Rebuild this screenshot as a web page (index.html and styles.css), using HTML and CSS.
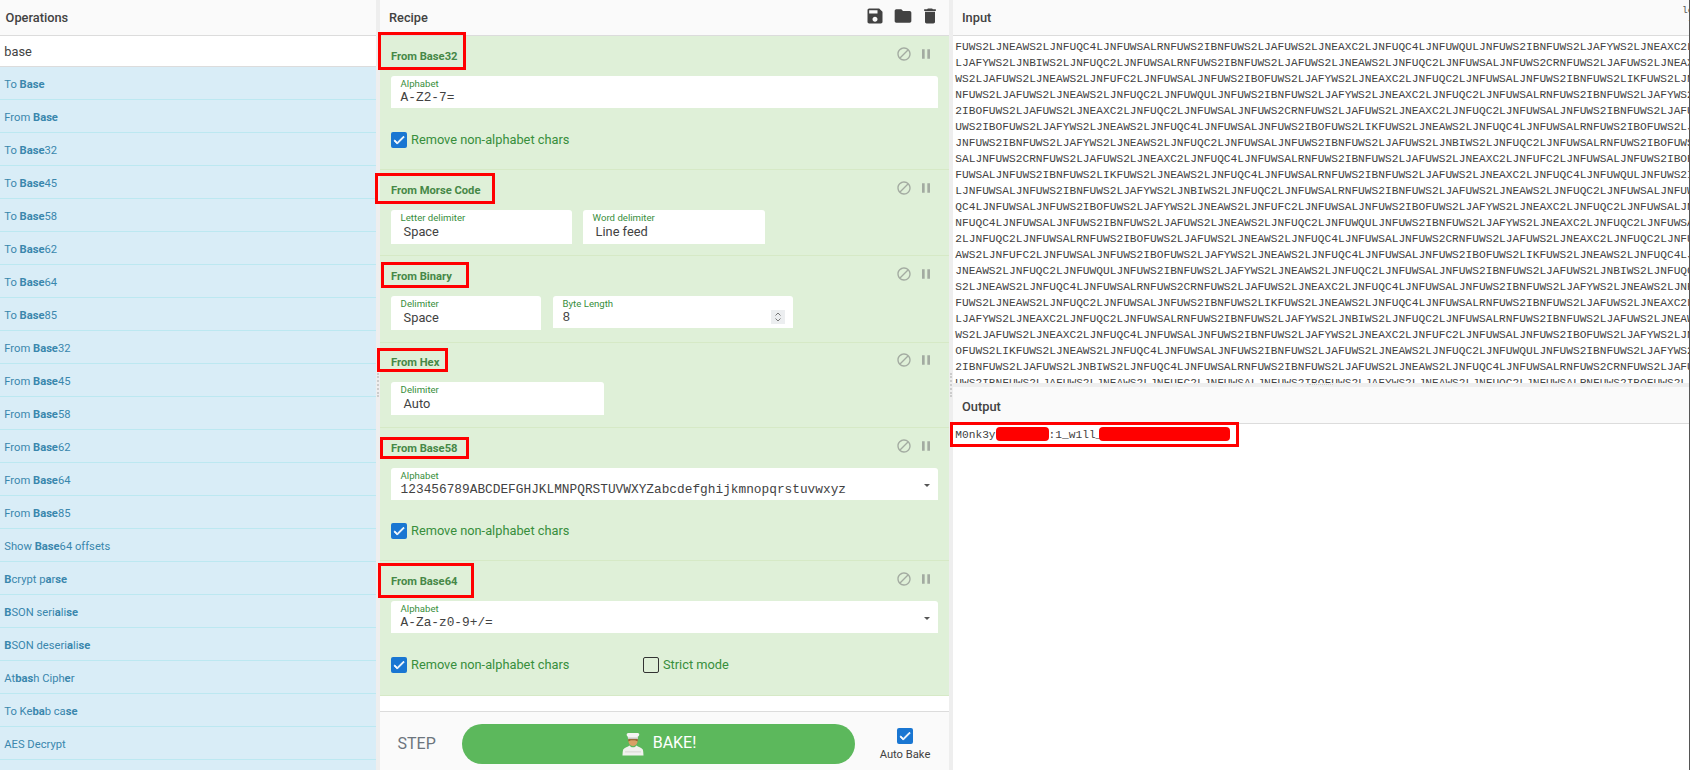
FILE: index.html
```html
<!DOCTYPE html>
<html lang="en">
<head>
<meta charset="utf-8">
<title>CyberChef</title>
<link rel="stylesheet" href="styles.css">
</head>
<body>
<svg class="defs" width="0" height="0" aria-hidden="true">
  <symbol id="i-save" viewBox="0 0 24 24"><path d="M17 3H5c-1.11 0-2 .9-2 2v14c0 1.1.89 2 2 2h14c1.1 0 2-.9 2-2V7l-4-4zm-5 16c-1.66 0-3-1.34-3-3s1.34-3 3-3 3 1.34 3 3-1.34 3-3 3zm3-10H5V5h10v4z"/></symbol>
  <symbol id="i-folder" viewBox="0 0 24 24"><path d="M10 4H4c-1.1 0-1.99.9-1.99 2L2 18c0 1.1.9 2 2 2h16c1.1 0 2-.9 2-2V8c0-1.1-.9-2-2-2h-8l-2-2z"/></symbol>
  <symbol id="i-trash" viewBox="0 0 24 24"><path d="M6 19c0 1.1.9 2 2 2h8c1.1 0 2-.9 2-2V7H6v12zM19 4h-3.5l-1-1h-5l-1 1H5v2h14V4z"/></symbol>
  <symbol id="i-block" viewBox="0 0 24 24"><path d="M12 2C6.48 2 2 6.48 2 12s4.48 10 10 10 10-4.48 10-10S17.52 2 12 2zM4 12c0-4.42 3.58-8 8-8 1.85 0 3.55.63 4.9 1.69L5.69 16.9C4.63 15.55 4 13.85 4 12zm8 8c-1.85 0-3.55-.63-4.9-1.69L18.31 7.1C19.37 8.45 20 10.15 20 12c0 4.42-3.58 8-8 8z"/></symbol>
  <symbol id="i-pause" viewBox="0 0 24 24"><path d="M6 19h4V5H6v14zm8-14v14h4V5h-4z"/></symbol>
  <symbol id="i-check" viewBox="0 0 24 24"><path d="M9 16.17L4.83 12l-1.42 1.41L9 19 21 7l-1.41-1.41z"/></symbol>
</svg>
<div class="app">
  <section class="pane ops-pane">
    <header class="head head-ops"><span class="head-title">Operations</span></header>
    <div class="search">base</div>
    <ul class="op-list">
      <li>To <b>Base</b></li>
      <li>From <b>Base</b></li>
      <li>To <b>Base</b>32</li>
      <li>To <b>Base</b>45</li>
      <li>To <b>Base</b>58</li>
      <li>To <b>Base</b>62</li>
      <li>To <b>Base</b>64</li>
      <li>To <b>Base</b>85</li>
      <li>From <b>Base</b>32</li>
      <li>From <b>Base</b>45</li>
      <li>From <b>Base</b>58</li>
      <li>From <b>Base</b>62</li>
      <li>From <b>Base</b>64</li>
      <li>From <b>Base</b>85</li>
      <li>Show <b>Base</b>64 offsets</li>
      <li><b>B</b>crypt p<b>a</b>r<b>se</b></li>
      <li><b>B</b>SON seri<b>a</b>li<b>se</b></li>
      <li><b>B</b>SON deseri<b>a</b>li<b>se</b></li>
      <li>At<b>bas</b>h Ciph<b>e</b>r</li>
      <li>To Ke<b>ba</b>b ca<b>se</b></li>
      <li>AES Decrypt</li>
    </ul>
  </section>
  <div class="gutter"></div>
  <section class="pane recipe-pane">
    <header class="head head-recipe">
      <span class="head-title">Recipe</span>
      <span class="head-icons">
        <svg class="icon-head"><use href="#i-save"/></svg>
        <svg class="icon-head"><use href="#i-folder"/></svg>
        <svg class="icon-head"><use href="#i-trash"/></svg>
      </span>
    </header>
    <div class="recipe-list">
      <article class="op op-check">
        <div class="op-title"><span>From Base32</span><span class="op-icons"><svg class="icon-op"><use href="#i-block"/></svg><svg class="icon-op"><use href="#i-pause"/></svg></span></div>
        <div class="args">
          <div class="field field-full"><div class="field-main"><label class="field-label">Alphabet</label><div class="field-value mono">A-Z2-7=</div></div></div>
        </div>
        <div class="checks"><span class="box box-on"><svg class="icon-check"><use href="#i-check"/></svg></span><span class="check-label">Remove non-alphabet chars</span></div>
      </article>
      <article class="op op-plain">
        <div class="op-title"><span>From Morse Code</span><span class="op-icons"><svg class="icon-op"><use href="#i-block"/></svg><svg class="icon-op"><use href="#i-pause"/></svg></span></div>
        <div class="args">
          <div class="field field-tall w-181"><div class="field-main"><label class="field-label">Letter delimiter</label><div class="field-value pick">Space</div></div></div>
          <div class="field field-tall w-182"><div class="field-main"><label class="field-label">Word delimiter</label><div class="field-value pick">Line feed</div></div></div>
        </div>
      </article>
      <article class="op op-plain op-binary">
        <div class="op-title"><span>From Binary</span><span class="op-icons"><svg class="icon-op"><use href="#i-block"/></svg><svg class="icon-op"><use href="#i-pause"/></svg></span></div>
        <div class="args">
          <div class="field field-tall w-150"><div class="field-main"><label class="field-label">Delimiter</label><div class="field-value pick">Space</div></div></div>
          <div class="field w-240"><div class="field-main"><label class="field-label">Byte Length</label><div class="field-value mono">8</div></div>
            <span class="spinner"><svg viewBox="0 0 14 14" width="14" height="14"><path d="M4.5 5.5L7 3l2.500 2.500M4.500 8.500L7 11l2.500-2.500"/></svg></span>
          </div>
        </div>
      </article>
      <article class="op op-plain op-hex">
        <div class="op-title"><span>From Hex</span><span class="op-icons"><svg class="icon-op"><use href="#i-block"/></svg><svg class="icon-op"><use href="#i-pause"/></svg></span></div>
        <div class="args">
          <div class="field field-mid w-213"><div class="field-main"><label class="field-label">Delimiter</label><div class="field-value pick">Auto</div></div></div>
        </div>
      </article>
      <article class="op op-check">
        <div class="op-title"><span>From Base58</span><span class="op-icons"><svg class="icon-op"><use href="#i-block"/></svg><svg class="icon-op"><use href="#i-pause"/></svg></span></div>
        <div class="args">
          <div class="field field-full"><div class="field-main"><label class="field-label">Alphabet</label><div class="field-value mono">123456789ABCDEFGHJKLMNPQRSTUVWXYZabcdefghijkmnopqrstuvwxyz</div></div><span class="caret"></span></div>
        </div>
        <div class="checks checks-tight"><span class="box box-on"><svg class="icon-check"><use href="#i-check"/></svg></span><span class="check-label">Remove non-alphabet chars</span></div>
      </article>
      <article class="op op-check op-last">
        <div class="op-title"><span>From Base64</span><span class="op-icons"><svg class="icon-op"><use href="#i-block"/></svg><svg class="icon-op"><use href="#i-pause"/></svg></span></div>
        <div class="args">
          <div class="field field-full"><div class="field-main"><label class="field-label">Alphabet</label><div class="field-value mono">A-Za-z0-9+/=</div></div><span class="caret"></span></div>
        </div>
        <div class="checks">
          <span class="box box-on"><svg class="icon-check"><use href="#i-check"/></svg></span><span class="check-label check-label-wide">Remove non-alphabet chars</span>
          <span class="box box-off"></span><span class="check-label">Strict mode</span>
        </div>
      </article>
    </div>
    <footer class="bake-bar">
      <span class="step">STEP</span>
      <button class="bake" type="button">
        <svg class="chef" viewBox="0 0 22 24" width="22" height="24">
          <path d="M5 1.500C7 .5 9 1.200 11 1c2 .2 4-.6 6 .5.800 1.400-.2 2.600-1.300 3.200L16 6.800H6L5.800 4.700C4.800 4 4.200 2.800 5 1.500z" fill="#f4f4f2"/>
          <path d="M6 5.500h10v1.600H6z" fill="#c9c9c4"/>
          <path d="M6.400 7.200h9.200c.3 2.800-.6 6.500-4.600 6.800-4-.3-4.900-4-4.600-6.800z" fill="#d9a066"/>
          <path d="M6.400 7.200h9.200l.1 2.400c-1-1-2-1.400-4.700-1.400s-3.700.4-4.700 1.400z" fill="#8a5a2b"/>
          <path d="M7.500 13.500C6 15 2.500 15.300 1.200 17.500.7 19 .6 21.500.5 23.500h21c-.1-2-.2-4.500-.7-6-1.300-2.200-4.800-2.500-6.300-4-1 1.400-2 1.800-3.500 1.800s-2.500-.4-3.500-1.800z" fill="#f1f1ee"/>
          <path d="M3 19.500h16v.8H3z" fill="#cfcfca"/>
        </svg>
        <span>BAKE!</span>
      </button>
      <div class="auto-bake">
        <span class="box box-on"><svg class="icon-check"><use href="#i-check"/></svg></span>
        <span class="auto-label">Auto Bake</span>
      </div>
    </footer>
  </section>
  <div class="gutter"></div>
  <section class="pane io-pane">
    <header class="head head-io"><span class="head-title">Input</span><span class="io-info">length: 3
 lines: 1</span></header>
<pre class="io-text input-text">FUWS2LJNEAWS2LJNFUQC4LJNFUWSALRNFUWS2IBNFUWS2LJAFUWS2LJNEAXC2LJNFUQC4LJNFUWQULJNFUWS2IBNFUWS2LJAFYWS2LJNEAXC2L
LJAFYWS2LJNBIWS2LJNFUQC2LJNFUWSALRNFUWS2IBNFUWS2LJAFUWS2LJNEAWS2LJNFUQC2LJNFUWSALJNFUWS2CRNFUWS2LJAFUWS2LJNEAX
WS2LJAFUWS2LJNEAWS2LJNFUFC2LJNFUWSALJNFUWS2IBOFUWS2LJAFYWS2LJNEAXC2LJNFUQC2LJNFUWSALJNFUWS2IBNFUWS2LIKFUWS2LJN
NFUWS2LJAFUWS2LJNEAWS2LJNFUQC2LJNFUWQULJNFUWS2IBNFUWS2LJAFYWS2LJNEAXC2LJNFUQC2LJNFUWSALRNFUWS2IBNFUWS2LJAFYWS2
2IBOFUWS2LJAFUWS2LJNEAXC2LJNFUQC2LJNFUWSALJNFUWS2CRNFUWS2LJAFUWS2LJNEAXC2LJNFUQC2LJNFUWSALJNFUWS2IBNFUWS2LJAFU
UWS2IBOFUWS2LJAFYWS2LJNEAWS2LJNFUQC4LJNFUWSALJNFUWS2IBOFUWS2LIKFUWS2LJNEAWS2LJNFUQC4LJNFUWSALRNFUWS2IBOFUWS2LJ
JNFUWS2IBNFUWS2LJAFYWS2LJNEAWS2LJNFUQC2LJNFUWSALJNFUWS2IBNFUWS2LJAFUWS2LJNBIWS2LJNFUQC2LJNFUWSALRNFUWS2IBOFUWS
SALJNFUWS2CRNFUWS2LJAFUWS2LJNEAXC2LJNFUQC4LJNFUWSALRNFUWS2IBNFUWS2LJAFUWS2LJNEAXC2LJNFUFC2LJNFUWSALJNFUWS2IBOF
FUWSALJNFUWS2IBNFUWS2LIKFUWS2LJNEAWS2LJNFUQC4LJNFUWSALRNFUWS2IBNFUWS2LJAFUWS2LJNEAXC2LJNFUQC4LJNFUWQULJNFUWS2I
LJNFUWSALJNFUWS2IBNFUWS2LJAFYWS2LJNBIWS2LJNFUQC2LJNFUWSALRNFUWS2IBNFUWS2LJAFUWS2LJNEAWS2LJNFUQC2LJNFUWSALJNFUW
QC4LJNFUWSALJNFUWS2IBOFUWS2LJAFYWS2LJNEAWS2LJNFUFC2LJNFUWSALJNFUWS2IBOFUWS2LJAFYWS2LJNEAXC2LJNFUQC2LJNFUWSALJN
NFUQC4LJNFUWSALJNFUWS2IBNFUWS2LJAFUWS2LJNEAWS2LJNFUQC2LJNFUWQULJNFUWS2IBNFUWS2LJAFYWS2LJNEAXC2LJNFUQC2LJNFUWSA
2LJNFUQC2LJNFUWSALRNFUWS2IBOFUWS2LJAFUWS2LJNEAWS2LJNFUQC4LJNFUWSALJNFUWS2CRNFUWS2LJAFUWS2LJNEAXC2LJNFUQC2LJNFU
AWS2LJNFUFC2LJNFUWSALJNFUWS2IBOFUWS2LJAFYWS2LJNEAWS2LJNFUQC4LJNFUWSALJNFUWS2IBOFUWS2LIKFUWS2LJNEAWS2LJNFUQC4LJ
JNEAWS2LJNFUQC2LJNFUWQULJNFUWS2IBNFUWS2LJAFYWS2LJNEAWS2LJNFUQC2LJNFUWSALJNFUWS2IBNFUWS2LJAFUWS2LJNBIWS2LJNFUQC
S2LJNEAWS2LJNFUQC4LJNFUWSALRNFUWS2CRNFUWS2LJAFUWS2LJNEAXC2LJNFUQC4LJNFUWSALJNFUWS2IBNFUWS2LJAFYWS2LJNEAWS2LJNF
FUWS2LJNEAWS2LJNFUQC2LJNFUWSALJNFUWS2IBNFUWS2LIKFUWS2LJNEAWS2LJNFUQC4LJNFUWSALRNFUWS2IBNFUWS2LJAFUWS2LJNEAXC2L
LJAFYWS2LJNEAXC2LJNFUQC2LJNFUWSALRNFUWS2IBNFUWS2LJAFYWS2LJNBIWS2LJNFUQC2LJNFUWSALRNFUWS2IBNFUWS2LJAFUWS2LJNEAW
WS2LJAFUWS2LJNEAXC2LJNFUQC4LJNFUWSALJNFUWS2IBNFUWS2LJAFYWS2LJNEAXC2LJNFUFC2LJNFUWSALJNFUWS2IBOFUWS2LJAFYWS2LJN
OFUWS2LIKFUWS2LJNEAWS2LJNFUQC4LJNFUWSALJNFUWS2IBNFUWS2LJAFUWS2LJNEAWS2LJNFUQC2LJNFUWQULJNFUWS2IBNFUWS2LJAFYWS2
2IBNFUWS2LJAFUWS2LJNBIWS2LJNFUQC4LJNFUWSALRNFUWS2IBNFUWS2LJAFUWS2LJNEAWS2LJNFUQC4LJNFUWSALRNFUWS2CRNFUWS2LJAFU
UWS2IBNFUWS2LJAFUWS2LJNEAWS2LJNFUFC2LJNFUWSALJNFUWS2IBOFUWS2LJAFYWS2LJNEAWS2LJNFUQC2LJNFUWSALRNFUWS2IBOFUWS2LJ</pre>
    <div class="gutter-h"></div>
    <header class="head head-io head-output"><span class="head-title">Output</span></header>
    <div class="io-text output-text">M0nk3y<span class="redact redact-a"></span>:1_w1ll_<span class="redact redact-b"></span></div>
  </section>
  <span class="mark mark-1"></span>
  <span class="mark mark-2"></span>
  <span class="mark mark-3"></span>
  <span class="mark mark-4"></span>
  <span class="mark mark-5"></span>
  <span class="mark mark-6"></span>
  <span class="mark mark-7"></span>
</div>
</body>
</html>
```
FILE: styles.css
```css
* { box-sizing: border-box; }
html, body { margin: 0; padding: 0; height: 100%; overflow: hidden; }
body { font-family: Roboto, "Liberation Sans", sans-serif; font-size: 11.2px; color: #424242; background: #fff; }
.defs { position: absolute; }
.app { position: relative; display: flex; width: 1690px; height: 770px; overflow: hidden; }
.pane { display: flex; flex-direction: column; height: 770px; overflow: hidden; position: relative; }
.ops-pane { width: 376px; flex: none; }
.recipe-pane { width: 569px; flex: none; }
.io-pane { flex: 1; min-width: 0; border-right: 1px solid #555; }
.gutter { width: 4px; flex: none; background: #eee; display: flex; align-items: center; justify-content: center; padding-bottom: 0; }
.gutter::after { content: ""; width: 0; height: 24px; border-left: 2px dotted #ccc; }
.gutter-h { height: 4px; flex: none; background: #eee; display: flex; justify-content: center; }
.gutter-h::after { content: ""; width: 24px; height: 0; border-top: 1px dotted #ccc; margin-top: 1px; }

.head { height: 36px; flex: none; display: flex; align-items: center; justify-content: space-between; background: #fafafa; border-bottom: 1px solid #dcdcdc; position: relative; }
.head-title { font-size: 12.8px; font-weight: 500; color: #424242; }
.head-ops { padding-left: 5.600px; }
.head-recipe { padding: 0 9px; }
.head-io { padding-left: 9px; }
.head-output { height: 37px; padding-top: 2px; }
.head-icons { display: flex; gap: 7.500px; margin-top: -3px; }
.icon-head { width: 20px; height: 20px; fill: #424242; display: block; }
.io-info { position: absolute; left: 729px; top: 4px; font: 9.600px/14px "Liberation Mono", monospace; white-space: pre; color: #555; }

.search { height: 31px; flex: none; display: flex; align-items: center; padding-left: 4.300px; background: #fff; border-bottom: 1px solid #dcdcdc; font-size: 12.8px; color: #424242; }
.op-list { list-style: none; margin: 0; padding: 0; flex: 1; background: #d9edf7; overflow: hidden; }
.op-list li { height: 33px; display: flex; align-items: center; padding-left: 4.300px; padding-top: 2px; border-bottom: 1px solid #bce8f1; color: #3a87ad; white-space: pre; }
.op-list b { font-weight: 700; }

.recipe-list { flex: 1; min-height: 0; background: #fff; overflow: hidden; }
.op { background: #dff0d8; border-bottom: 1px solid #d6e9c6; color: #468847; }
.op-check { padding: 9px 11px 21px; }
.op-plain { padding: 9px 11px 11px; }
.op-binary { padding-bottom: 12px; }
.op-hex { padding-top: 8px; padding-bottom: 12px; }
.op-last { padding-bottom: 22px; }
.op-title { height: 22px; display: flex; align-items: center; justify-content: space-between; font-weight: 700; font-size: 11.200px; margin-bottom: 9px; }
.op-icons { display: flex; gap: 6px; margin-top: -4px; margin-right: 4px; }
.icon-op { width: 16px; height: 16px; fill: #a3aba1; display: block; }
.args { display: flex; gap: 11px; }
.field { display: flex; align-items: center; height: 32px; background: #fff; border-radius: 3px 3px 0 0; padding: 2px 9.600px 0; overflow: hidden; }
.field-main { flex: 1; min-width: 0; align-self: flex-start; }
.field-full { width: 547px; }
.field-tall { height: 34px; }
.field-mid { height: 33px; }
.w-181 { width: 181px; }
.w-182 { width: 182px; margin-left: 0; }
.w-150 { width: 150px; margin-right: 1px; }
.w-240 { width: 240px; }
.w-213 { width: 213px; }
.field-label { display: block; height: 12px; font-size: 9.600px; line-height: 12px; color: #388e3c; }
.field-value { height: 16px; line-height: 16px; font-size: 12.800px; color: #424242; white-space: pre; }
.mono { font-family: "Liberation Mono", monospace; }
.pick { padding-left: 3px; }
.spinner { width: 14px; height: 14px; background: #eceef0; margin: 8px -1.600px 0 0; flex: none; }
.spinner svg { display: block; fill: none; stroke: #777; stroke-width: 1; }
.caret { flex: none; width: 0; height: 0; margin-right: -1.600px; border: 3px solid transparent; border-top-color: #555; border-bottom-width: 0; margin-left: 0; }

.checks { display: flex; align-items: center; height: 16px; margin-top: 24px; }
.checks-tight { margin-top: 23px; }
.box { width: 16px; height: 16px; flex: none; display: flex; align-items: center; justify-content: center; border-radius: 2px; }
.box-on { background: #1976d2; }
.box-off { border: 1.300px solid #333; background: transparent; }
.icon-check { width: 14px; height: 14px; fill: #fff; stroke: #fff; stroke-width: 1.500px; }
.check-label { margin-left: 4px; padding-bottom: 2px; font-size: 12.800px; color: #388e3c; white-space: pre; }
.check-label-wide { width: 232px; }

.bake-bar { height: 59px; flex: none; display: flex; align-items: flex-start; padding-top: 12px; background: #fafafa; border-top: 1px solid #dcdcdc; }
.step { width: 82px; padding-left: 17.500px; line-height: 39px; font-size: 16px; color: #6c757d; flex: none; }
.bake { width: 393px; height: 40px; flex: none; display: flex; align-items: center; justify-content: center; gap: 8.500px; padding: 0 0 3px 1.500px; border: 0; border-radius: 20px; background: #5cb85c; color: #fff; font: 400 16px Roboto, sans-serif; }
.chef { display: block; margin-top: 2px; }
.auto-bake { flex: 1; margin-top: 4px; display: flex; flex-direction: column; align-items: center; padding-left: 6px; }
.auto-label { margin-top: 4px; font-size: 11.200px; line-height: 14px; color: #424242; white-space: pre; }

.io-text { margin: 0; font: 11.200px/16px "Liberation Mono", monospace; color: #424242; white-space: pre; overflow: hidden; padding: 3px 0 0 2.300px; background: #fff; }
.input-text { height: 347px; flex: none; }
.output-text { flex: 1; padding-top: 3px; display: block; }
.redact { display: inline-block; height: 14px; vertical-align: -3px; background: #f00; border-radius: 4px; }
.redact-a { width: 53px; }
.redact-b { width: 131px; margin-left: -3px; }

.mark { position: absolute; border: 3px solid #f00; pointer-events: none; }
.mark-1 { left: 378px; top: 32px; width: 88px; height: 38px; }
.mark-2 { left: 375px; top: 173px; width: 120px; height: 31px; }
.mark-3 { left: 381px; top: 262px; width: 88px; height: 26px; }
.mark-4 { left: 377px; top: 348px; width: 71px; height: 24px; }
.mark-5 { left: 380px; top: 437px; width: 89px; height: 22px; }
.mark-6 { left: 378px; top: 563px; width: 96px; height: 35px; }
.mark-7 { left: 950px; top: 422px; width: 289px; height: 25px; }
```
